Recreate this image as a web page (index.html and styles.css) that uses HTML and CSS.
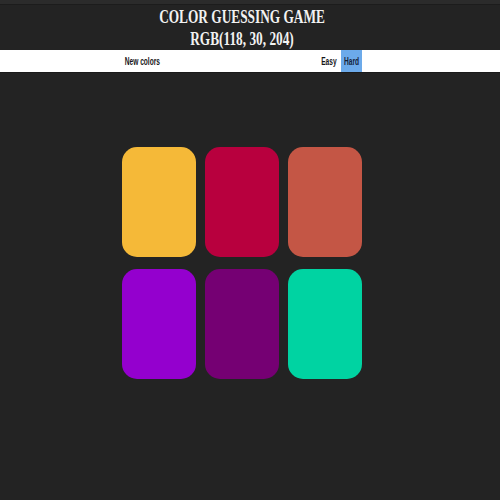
FILE: index.html
```html
<!DOCTYPE html>
<html>
<head>
<meta charset="utf-8">
<link rel="stylesheet" href="styles.css">
</head>
<body>
<div class="topline"></div>
<header class="header">
  <div class="inner">
    <h1 class="title"><span class="squish-serif">COLOR GUESSING GAME</span><br><span class="squish-serif">RGB(118, 30, 204)</span></h1>
  </div>
</header>
<nav class="stripe">
  <div class="inner">
    <div class="controls">
      <button class="btn btn-new"><span class="squish">New colors</span></button>
      <div class="modes">
        <button class="btn btn-easy"><span class="squish">Easy</span></button>
        <button class="btn btn-hard selected"><span class="squish">Hard</span></button>
      </div>
    </div>
  </div>
</nav>
<main class="board">
  <div class="inner">
    <div class="grid">
      <div class="square c1"></div>
      <div class="square c2"></div>
      <div class="square c3"></div>
      <div class="square c4"></div>
      <div class="square c5"></div>
      <div class="square c6"></div>
    </div>
  </div>
</main>
</body>
</html>
```
FILE: styles.css
```css
html, body {
  margin: 0;
  padding: 0;
  background: #232323;
}
body {
  font-family: "Liberation Sans", Arial, sans-serif;
}
.topline {
  height: 4px;
  background: #2b2b2b;
  border-bottom: 1px solid #1c1c1c;
}
.inner {
  width: 484px;
}
.header {
  padding-top: 1px;
}
.title {
  margin: 0;
  text-align: center;
  font-family: "Liberation Serif", "Times New Roman", serif;
  font-weight: bold;
  font-size: 18px;
  line-height: 22px;
  color: #f2f2f2;
  white-space: nowrap;
}
.squish-serif {
  display: inline-block;
  transform: scaleX(0.74);
  transform-origin: center;
}
.stripe {
  background: #ffffff;
  height: 22px;
  border-bottom: 1px solid #1a1a1a;
}
.controls {
  width: 240px;
  margin: 0 auto;
  height: 22px;
  display: flex;
  justify-content: space-between;
  align-items: stretch;
}
.modes {
  display: flex;
  gap: 1px;
}
.btn {
  border: none;
  background: transparent;
  padding: 0;
  margin: 0;
  height: 22px;
  display: flex;
  align-items: center;
  justify-content: center;
  font-family: "Liberation Sans", Arial, sans-serif;
  font-weight: bold;
  font-size: 11px;
  color: #151518;
  overflow: visible;
}
.squish {
  display: inline-block;
  flex-shrink: 0;
  white-space: nowrap;
  transform: scaleX(0.6);
  transform-origin: center;
}
.btn-new { width: 41px; }
.btn-easy { width: 22px; }
.btn-hard { width: 21px; }
.selected {
  background: #6caaea;
  color: #15233a;
}
.board {
  padding-top: 74px;
}
.grid {
  width: 240px;
  margin: 0 auto;
  display: grid;
  grid-template-columns: repeat(3, 74px);
  grid-auto-rows: 110px;
  column-gap: 9px;
  row-gap: 12px;
}
.square {
  border-radius: 15px;
}
.c1 { background: #f5b938; }
.c2 { background: #b8003e; }
.c3 { background: #c45645; }
.c4 { background: #9400ce; }
.c5 { background: #750073; }
.c6 { background: #00d3a2; }
```
